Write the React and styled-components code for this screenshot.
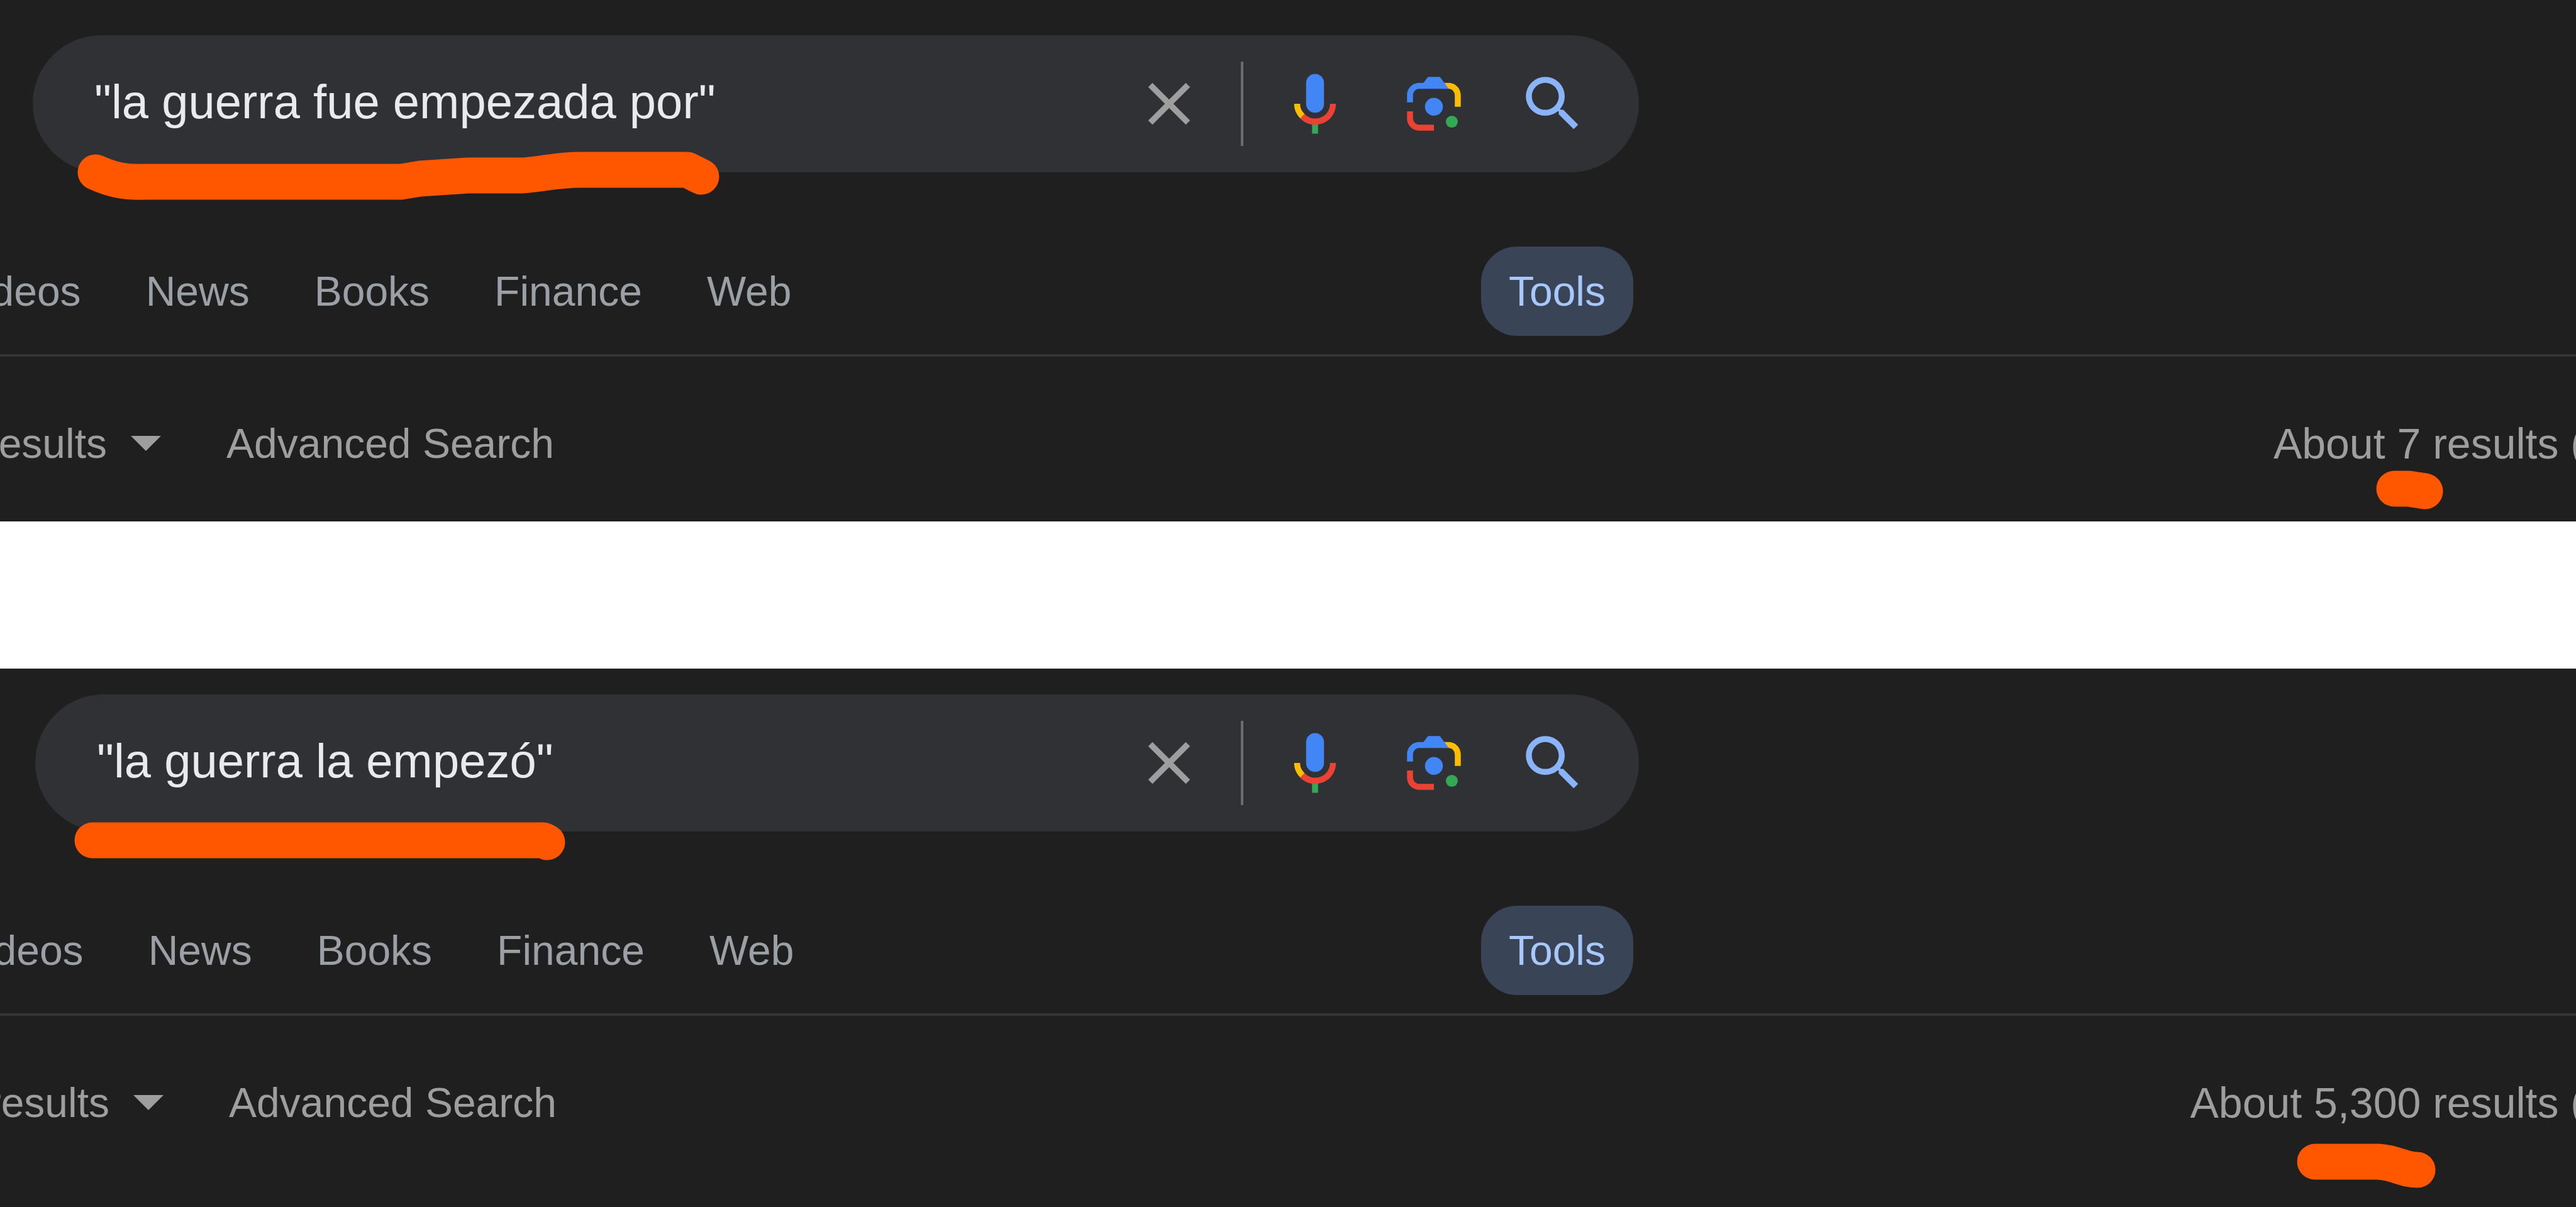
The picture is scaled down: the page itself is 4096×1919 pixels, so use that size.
import React from 'react';
import styled, { createGlobalStyle } from 'styled-components';

const GlobalStyle = createGlobalStyle`
  *, *::before, *::after { box-sizing: border-box; }
  body {
    margin: 0;
    background: #ffffff;
    font-family: "Liberation Sans", Arial, sans-serif;
  }
`;

const Page = styled.main`
  display: flex;
  flex-direction: column;
  gap: 234px;
  min-height: 100vh;
`;

const Panel = styled.section`
  display: flex;
  flex-direction: column;
  flex-grow: ${(p) => (p.$grow ? 1 : 0)};
  padding-top: ${(p) => p.$top}px;
  padding-bottom: 84px;
  overflow: hidden;
  background: #1f1f1f;
`;

const Column = styled.div`
  width: 2606px;
  max-width: 100%;
`;

const SearchBar = styled.form`
  position: relative;
  display: flex;
  align-items: center;
  height: 218px;
  margin-left: ${(p) => 52 + p.$shift}px;
  padding: 0 80px 0 98px;
  border-radius: 109px;
  background: #303134;
`;

const Query = styled.input`
  flex: 1;
  min-width: 0;
  padding: 0 0 6px;
  border: 0;
  outline: 0;
  background: transparent;
  color: #e8eaed;
  font: 76px/96px "Liberation Sans", Arial, sans-serif;
`;

const Divider = styled.span`
  width: 4px;
  height: 134px;
  margin: 0 57px;
  background: #6b6d70;
`;

const IconGroup = styled.div`
  display: flex;
  gap: 75px;
`;

const IconButton = styled.button`
  display: flex;
  padding: 0;
  border: 0;
  background: none;
  color: ${(p) => p.$color || 'inherit'};
  cursor: pointer;

  svg {
    width: 114px;
    height: 114px;
  }
`;

const TabBar = styled.div`
  display: flex;
  align-items: center;
  justify-content: space-between;
  margin-top: 118px;
  padding-right: 9px;
`;

const Tabs = styled.nav`
  display: flex;
  gap: 103px;
  margin-left: ${(p) => p.$shift - 72}px;
`;

const Tab = styled.a`
  color: #9aa0a6;
  font-size: 66px;
  line-height: 80px;
  text-decoration: none;
`;

const ToolsButton = styled.button`
  height: 142px;
  padding: 0 44px;
  border: 0;
  border-radius: 57px;
  background: #394457;
  color: #a8c7fa;
  font: 66px/80px "Liberation Sans", Arial, sans-serif;
`;

const Rule = styled.hr`
  width: 100%;
  height: 4px;
  margin: 29px 0 98px;
  border: 0;
  background: #313335;
`;

const FilterRow = styled.div`
  display: flex;
  justify-content: space-between;
`;

const Filters = styled.div`
  display: flex;
  gap: 104px;
  margin-left: ${(p) => p.$shift - 116}px;
`;

const SelectWrap = styled.label`
  display: flex;
  align-items: center;
  gap: 37px;
`;

const ResultSelect = styled.select`
  appearance: none;
  height: 80px;
  padding: 0;
  border: 0;
  background: none;
  color: #9e9e9e;
  font: 66px/80px "Liberation Sans", Arial, sans-serif;
`;

const Caret = styled.span`
  border: 24px solid transparent;
  border-top-color: #9e9e9e;
  border-bottom: 0;
`;

const FilterLink = styled.a`
  color: #9e9e9e;
  font-size: 66px;
  line-height: 80px;
  text-decoration: none;
`;

const Stats = styled.div`
  position: relative;
  margin-right: -14px;
  color: #9e9e9e;
  font-size: 68px;
  line-height: 80px;
  white-space: nowrap;
`;

const Marker = styled.svg`
  position: absolute;
  top: ${(p) => p.$top}px;
  ${(p) => (p.$right ? `right: ${p.$right}px;` : `left: ${p.$left}px;`)}
  width: ${(p) => p.$w}px;
  height: ${(p) => p.$h}px;
  overflow: visible;
  pointer-events: none;
  fill: none;
  stroke: #ff5600;
  stroke-width: 57px;
  stroke-linecap: round;
  stroke-linejoin: round;
`;

const CloseIcon = () => (
  <svg viewBox="0 0 24 24" fill="currentColor" aria-hidden="true">
    <path d="M19 6.41L17.59 5 12 10.59 6.41 5 5 6.41 10.59 12 5 17.59 6.41 19 12 13.41 17.59 19 19 17.59 13.41 12z" />
  </svg>
);

const MicIcon = () => (
  <svg viewBox="0 0 24 24" aria-hidden="true">
    <path fill="#4285f4" d="M12 15c1.66 0 3-1.31 3-2.97V5.01C15 3.34 13.66 2 12 2S9 3.34 9 5.01v7.02C9 13.69 10.34 15 12 15z" />
    <path fill="#34a853" d="M11 18.08h2V22h-2z" />
    <path fill="#fbbc04" d="M7.05 16.87C5.78 15.54 5 14.04 5 12h2c0 1.45.56 2.42 1.47 3.38v.32l-1.15 1.18z" />
    <path fill="#ea4335" d="M12 16.93a4.97 5.25 0 0 1-3.54-1.55l-1.41 1.49C8.31 18.21 10.07 19 12 19c3.87 0 6.99-2.92 6.99-7H17c0 2.92-2.24 4.93-5 4.93z" />
  </svg>
);

const LensIcon = () => (
  <svg viewBox="0 0 192 192" aria-hidden="true">
    <circle fill="#34a853" cx="144" cy="144" r="16" />
    <circle fill="#4285f4" cx="96" cy="104" r="24" />
    <path fill="#ea4335" d="M24 135.2C24 153.31 38.69 168 56.8 168H96v-16l-40.1-.1C47.1 151.9 40 143.71 40 134v-18H24z" />
    <path fill="#fbbc04" d="M168 72.8C168 54.69 153.31 40 135.2 40H116l20 16c8.8 0 16 8.29 16 18v30h16z" />
    <path fill="#4285f4" d="M112 24H80L68 40H56.8C38.69 40 24 54.69 24 72.8V92h16V74c0-9.71 7.2-18 16-18h80z" />
  </svg>
);

const SearchIcon = () => (
  <svg viewBox="0 0 24 24" fill="currentColor" aria-hidden="true">
    <path d="M15.5 14h-.79l-.28-.27A6.471 6.471 0 0 0 16 9.5 6.5 6.5 0 1 0 9.5 16c1.61 0 3.09-.59 4.23-1.57l.27.28v.79l5 4.99L20.49 19l-4.99-5zm-6 0C7.01 14 5 11.99 5 9.5S7.01 5 9.5 5 14 7.01 14 9.5 11.99 14 9.5 14z" />
  </svg>
);

const TABS = ['Videos', 'News', 'Books', 'Finance', 'Web'];

const SEARCHES = [
  {
    query: '"la guerra fue empezada por"',
    stats: 'About 7 results (',
    top: 56,
    shift: 0,
    queryMark: { left: 71, top: 187, w: 1021, h: 72, d: 'M29 31 C58 44 76 47 110 46 H515 L545 41 L621 36 H707 C740 34 760 27 800 27 H970 L992 38' },
    statsMark: { right: 225, top: 83, w: 107, h: 63, d: 'M29 29 H52 L78 33' },
  },
  {
    query: '"la guerra la empezó"',
    stats: 'About 5,300 results (',
    top: 41,
    shift: 4,
    queryMark: { left: 62, top: 203, w: 781, h: 61, d: 'M29 29 H746 L752 32' },
    statsMark: { right: 237, top: 105, w: 221, h: 72, d: 'M29 29 H130 C160 31 168 42 192 42' },
  },
];

function Mark({ left, right, top, w, h, d }) {
  return (
    <Marker $left={left} $right={right} $top={top} $w={w} $h={h} viewBox={`0 0 ${w} ${h}`} aria-hidden="true">
      <path d={d} />
    </Marker>
  );
}

function SearchPanel({ search, grow }) {
  const { query, stats, top, shift, queryMark, statsMark } = search;
  return (
    <Panel $top={top} $grow={grow}>
      <Column>
        <SearchBar $shift={shift} role="search" onSubmit={(e) => e.preventDefault()}>
          <Query type="text" aria-label="Search" defaultValue={query} spellCheck={false} />
          <IconButton type="button" aria-label="Clear" $color="#9e9e9e"><CloseIcon /></IconButton>
          <Divider />
          <IconGroup>
            <IconButton type="button" aria-label="Search by voice"><MicIcon /></IconButton>
            <IconButton type="button" aria-label="Search by image"><LensIcon /></IconButton>
            <IconButton type="submit" aria-label="Search" $color="#8ab4f8"><SearchIcon /></IconButton>
          </IconGroup>
          <Mark {...queryMark} />
        </SearchBar>
        <TabBar>
          <Tabs $shift={shift}>
            {TABS.map((tab) => <Tab key={tab} href="#">{tab}</Tab>)}
          </Tabs>
          <ToolsButton type="button">Tools</ToolsButton>
        </TabBar>
      </Column>
      <Rule />
      <FilterRow>
        <Filters $shift={shift}>
          <SelectWrap>
            <ResultSelect aria-label="Results filter"><option>All results</option></ResultSelect>
            <Caret />
          </SelectWrap>
          <FilterLink href="#">Advanced Search</FilterLink>
        </Filters>
        <Stats>
          {stats}
          <Mark {...statsMark} />
        </Stats>
      </FilterRow>
    </Panel>
  );
}

export default function App() {
  return (
    <>
      <GlobalStyle />
      <Page>
        {SEARCHES.map((search, i) => (
          <SearchPanel key={search.query} search={search} grow={i === SEARCHES.length - 1} />
        ))}
      </Page>
    </>
  );
}
